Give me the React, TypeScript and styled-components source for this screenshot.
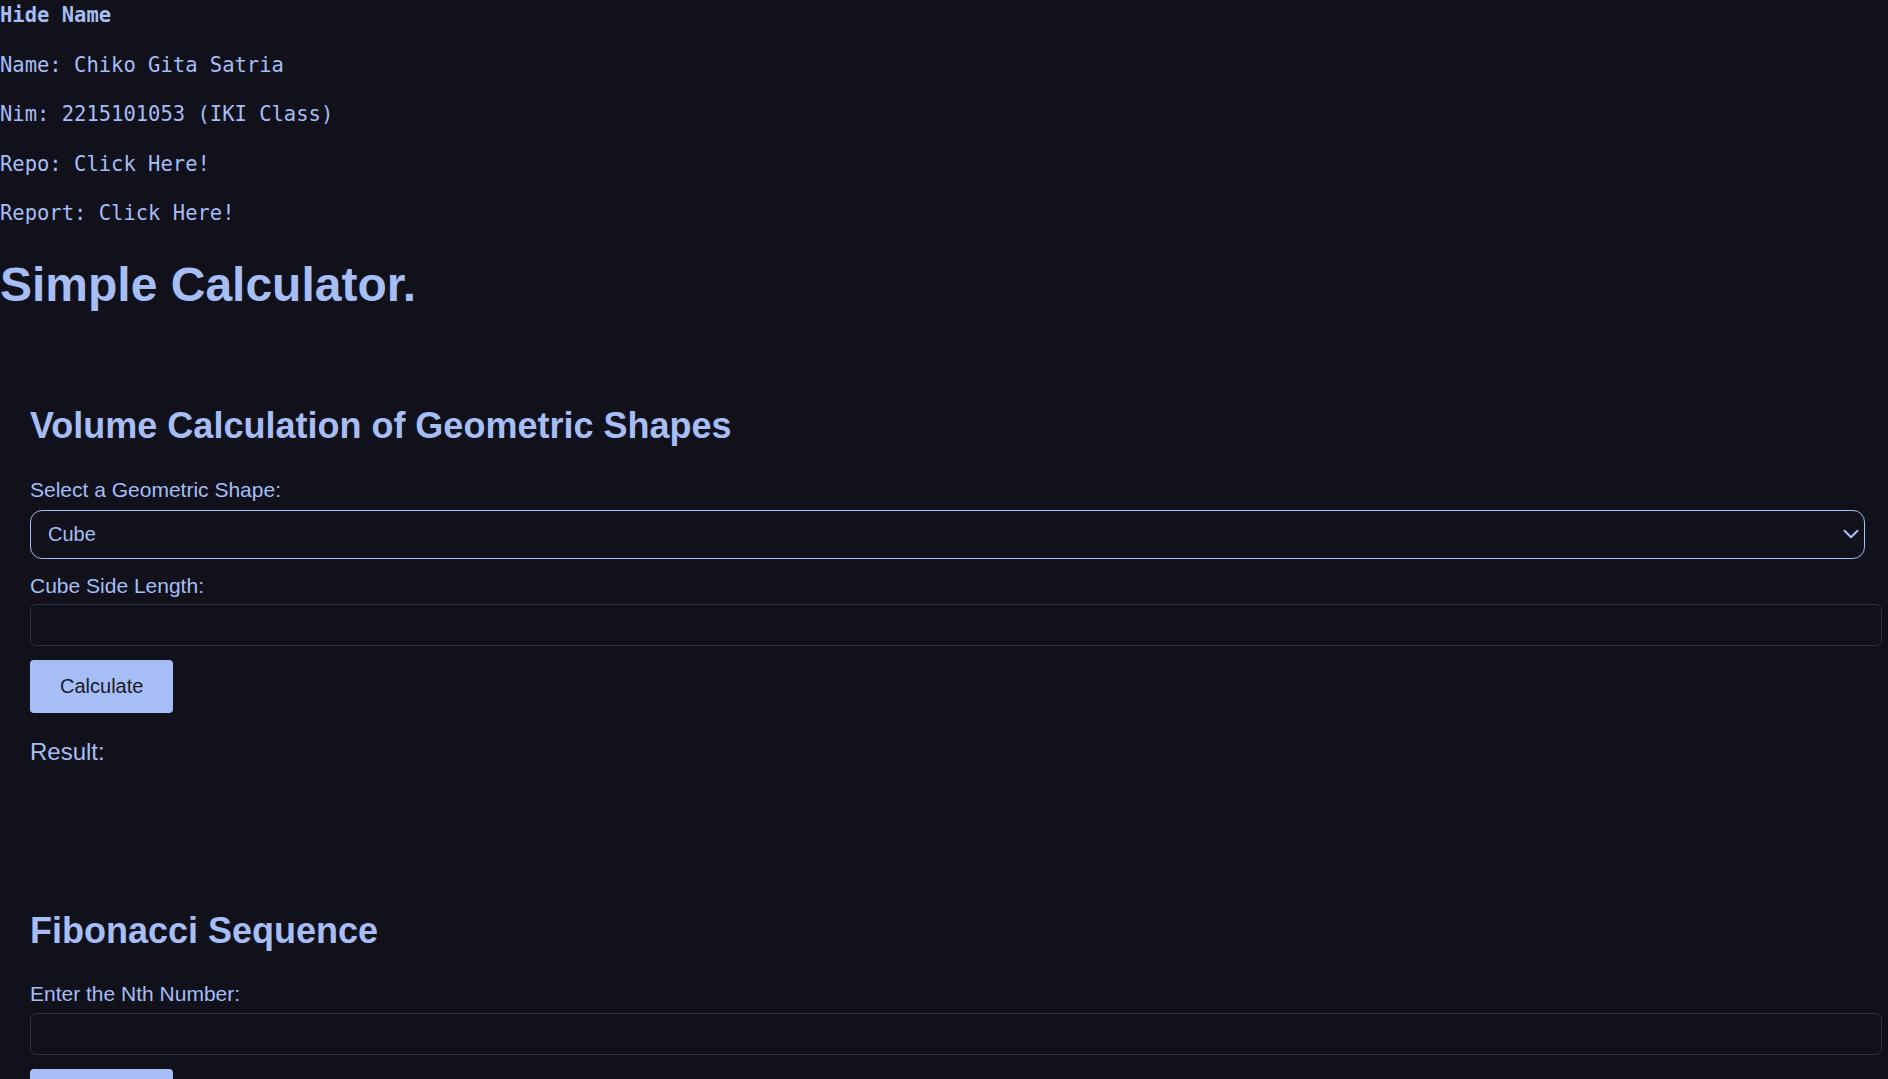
import React, { useState } from "react";
import styled, { createGlobalStyle } from "styled-components";

const BLUE = "#a6bdf5";
const BG = "#10111a";
const DARK = "#1a1b26";
const INPUT_BORDER = "#2c3142";

const GlobalStyle = createGlobalStyle`
  html, body {
    margin: 0;
    padding: 0;
    background: ${BG};
  }
  body {
    min-height: 100vh;
    color: ${BLUE};
    font-family: "Liberation Sans", Arial, sans-serif;
  }
  * { box-sizing: border-box; }
`;

const Page = styled.div`
  display: flex;
  flex-direction: column;
`;

const InfoBlock = styled.div`
  display: flex;
  flex-direction: column;
  gap: 25.5px;
  padding-top: 3.2px;
  font-family: "DejaVu Sans Mono", "Liberation Mono", monospace;
  font-size: 20.5px;
  line-height: 24px;
`;

const InfoLine = styled.p<{ $bold?: boolean }>`
  margin: 0;
  font-weight: ${(p) => (p.$bold ? 700 : 400)};
  color: ${BLUE};
  white-space: pre;
`;

const InfoLink = styled.a`
  color: ${BLUE};
  text-decoration: none;
`;

const Title = styled.h1`
  margin: 32px 0 0;
  font-size: 48px;
  line-height: 56px;
  font-weight: 700;
  color: ${BLUE};
`;

const Section = styled.section<{ $top: number }>`
  display: flex;
  flex-direction: column;
  align-items: stretch;
  padding: 0 23.5px 0 30px;
  margin-top: ${(p) => p.$top}px;
`;

const SectionTitle = styled.h2`
  margin: 0;
  font-size: 36px;
  line-height: 42px;
  font-weight: 700;
  color: ${BLUE};
`;

const FieldLabel = styled.label<{ $top: number }>`
  display: block;
  margin-top: ${(p) => p.$top}px;
  font-size: 21px;
  line-height: 24px;
  color: ${BLUE};
`;

const SelectWrap = styled.div`
  position: relative;
  margin-top: 8px;
`;

const ShapeSelect = styled.select`
  appearance: none;
  -webkit-appearance: none;
  display: block;
  width: 100%;
  height: 49px;
  padding: 0 40px 0 17px;
  border: 1px solid ${BLUE};
  border-radius: 12px;
  background: ${BG};
  color: ${BLUE};
  font-family: "Liberation Sans", Arial, sans-serif;
  font-size: 20px;
  outline: none;
`;

const Chevron = styled.svg`
  position: absolute;
  right: 0.5px;
  top: 50%;
  transform: translateY(-50%);
  width: 26px;
  height: 26px;
  pointer-events: none;
`;

const NumberInput = styled.input<{ $top: number }>`
  box-sizing: content-box;
  display: block;
  width: 100%;
  height: 24px;
  margin: ${(p) => p.$top}px 0 0 -0.5px;
  padding: 8px;
  border: 1px solid ${INPUT_BORDER};
  border-radius: 6px;
  background: ${BG};
  color: ${BLUE};
  font-family: "Liberation Sans", Arial, sans-serif;
  font-size: 20px;
  outline: none;
`;

const CalcButton = styled.button<{ $top: number }>`
  align-self: flex-start;
  margin-top: ${(p) => p.$top}px;
  padding: 15px 30px;
  border: none;
  border-radius: 4px;
  background: ${BLUE};
  color: ${DARK};
  font-family: "Liberation Sans", Arial, sans-serif;
  font-size: 20px;
  line-height: normal;
  cursor: pointer;
`;

const ResultText = styled.div`
  margin-top: 24.4px;
  font-size: 24px;
  line-height: 28px;
  color: ${BLUE};
`;

const shapes = ["Cube", "Cuboid", "Sphere", "Cylinder", "Cone"];

export default function App() {
  const [shape, setShape] = useState("Cube");
  const [side, setSide] = useState("");
  const [nth, setNth] = useState("");

  return (
    <Page>
      <GlobalStyle />
      <InfoBlock>
        <InfoLine $bold>Hide Name</InfoLine>
        <InfoLine>Name: Chiko Gita Satria</InfoLine>
        <InfoLine>Nim: 2215101053 (IKI Class)</InfoLine>
        <InfoLine>
          Repo: <InfoLink href="#">Click Here!</InfoLink>
        </InfoLine>
        <InfoLine>
          Report: <InfoLink href="#">Click Here!</InfoLink>
        </InfoLine>
      </InfoBlock>

      <Title>Simple Calculator.</Title>

      <Section $top={92}>
        <SectionTitle>Volume Calculation of Geometric Shapes</SectionTitle>
        <FieldLabel $top={30.5} htmlFor="shape">
          Select a Geometric Shape:
        </FieldLabel>
        <SelectWrap>
          <ShapeSelect
            id="shape"
            value={shape}
            onChange={(e) => setShape(e.target.value)}
          >
            {shapes.map((s) => (
              <option key={s} value={s}>
                {s}
              </option>
            ))}
          </ShapeSelect>
          <Chevron viewBox="0 0 24 24" fill="none">
            <path
              d="m6 9 6 6 6-6"
              stroke={BLUE}
              strokeWidth="1.9"
              strokeLinecap="round"
              strokeLinejoin="round"
            />
          </Chevron>
        </SelectWrap>
        <FieldLabel $top={15.5} htmlFor="side">
          {shape} Side Length:
        </FieldLabel>
        <NumberInput
          id="side"
          type="text"
          $top={6}
          value={side}
          onChange={(e) => setSide(e.target.value)}
        />
        <CalcButton $top={14}>Calculate</CalcButton>
        <ResultText>Result:</ResultText>
      </Section>

      <Section $top={144}>
        <SectionTitle>Fibonacci Sequence</SectionTitle>
        <FieldLabel $top={30.5} htmlFor="nth">
          Enter the Nth Number:
        </FieldLabel>
        <NumberInput
          id="nth"
          type="text"
          $top={7}
          value={nth}
          onChange={(e) => setNth(e.target.value)}
        />
        <CalcButton $top={14}>Calculate</CalcButton>
        <ResultText>Result:</ResultText>
      </Section>
    </Page>
  );
}
